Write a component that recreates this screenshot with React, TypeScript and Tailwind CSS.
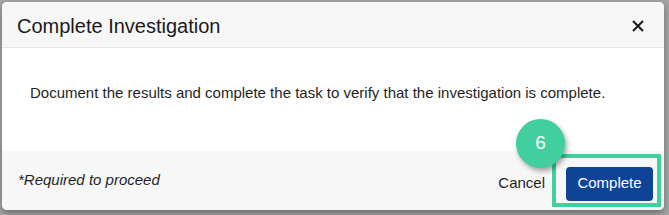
export default function App() {
  return (
    <div
      className="relative w-[669px] h-[215px] bg-[#a4a4a4] pt-[2px] pl-[2px] overflow-hidden"
      style={{ fontFamily: '"Liberation Sans", Arial, sans-serif' }}
    >
      <div className="w-[662px] h-[208px] rounded-[5px] bg-white overflow-hidden flex flex-col shadow-[0_3px_6px_rgba(0,0,0,0.35)]">
        <div className="h-[46px] shrink-0 bg-[#f7f7f7] border-b border-[#e6e6e6] flex items-center justify-between pl-[15px] pr-[20px]">
          <span className="text-[20px] text-[#1a1a1a] leading-none mt-[2px]">Complete Investigation</span>
          <svg width="12" height="12" viewBox="0 0 12 12" className="mt-[2px]">
            <path d="M1 1 L11 11 M11 1 L1 11" stroke="#1a1a1a" strokeWidth="2" />
          </svg>
        </div>
        <div className="h-[103px] shrink-0 pl-[28px] pt-[34px]">
          <p className="text-[15px] text-[#1f1f1f]">
            Document the results and complete the task to verify that the investigation is complete.
          </p>
        </div>
        <div className="flex-1 bg-[#f7f7f7] flex items-center justify-between pl-[16px] pr-[11px]">
          <span className="text-[15px] italic text-[#1f1f1f]">*Required to proceed</span>
          <div className="flex items-center gap-[21px] mt-[6px]">
            <span className="text-[15px] text-[#1f1f1f]">Cancel</span>
            <button className="w-[87px] h-[34px] rounded-[4px] bg-[#0e4396] text-white text-[15px]">
              Complete
            </button>
          </div>
        </div>
      </div>
      <div className="absolute left-[552px] top-[154px] w-[109px] h-[53px] border-[4px] border-[#41cf9f]" />
      <div className="absolute left-[516px] top-[119px] w-[49px] h-[49px] rounded-full bg-[#41cf9f] flex items-center justify-center text-white text-[19px] shadow-[2px_3px_5px_rgba(0,0,0,0.35)]">
        6
      </div>
    </div>
  );
}
